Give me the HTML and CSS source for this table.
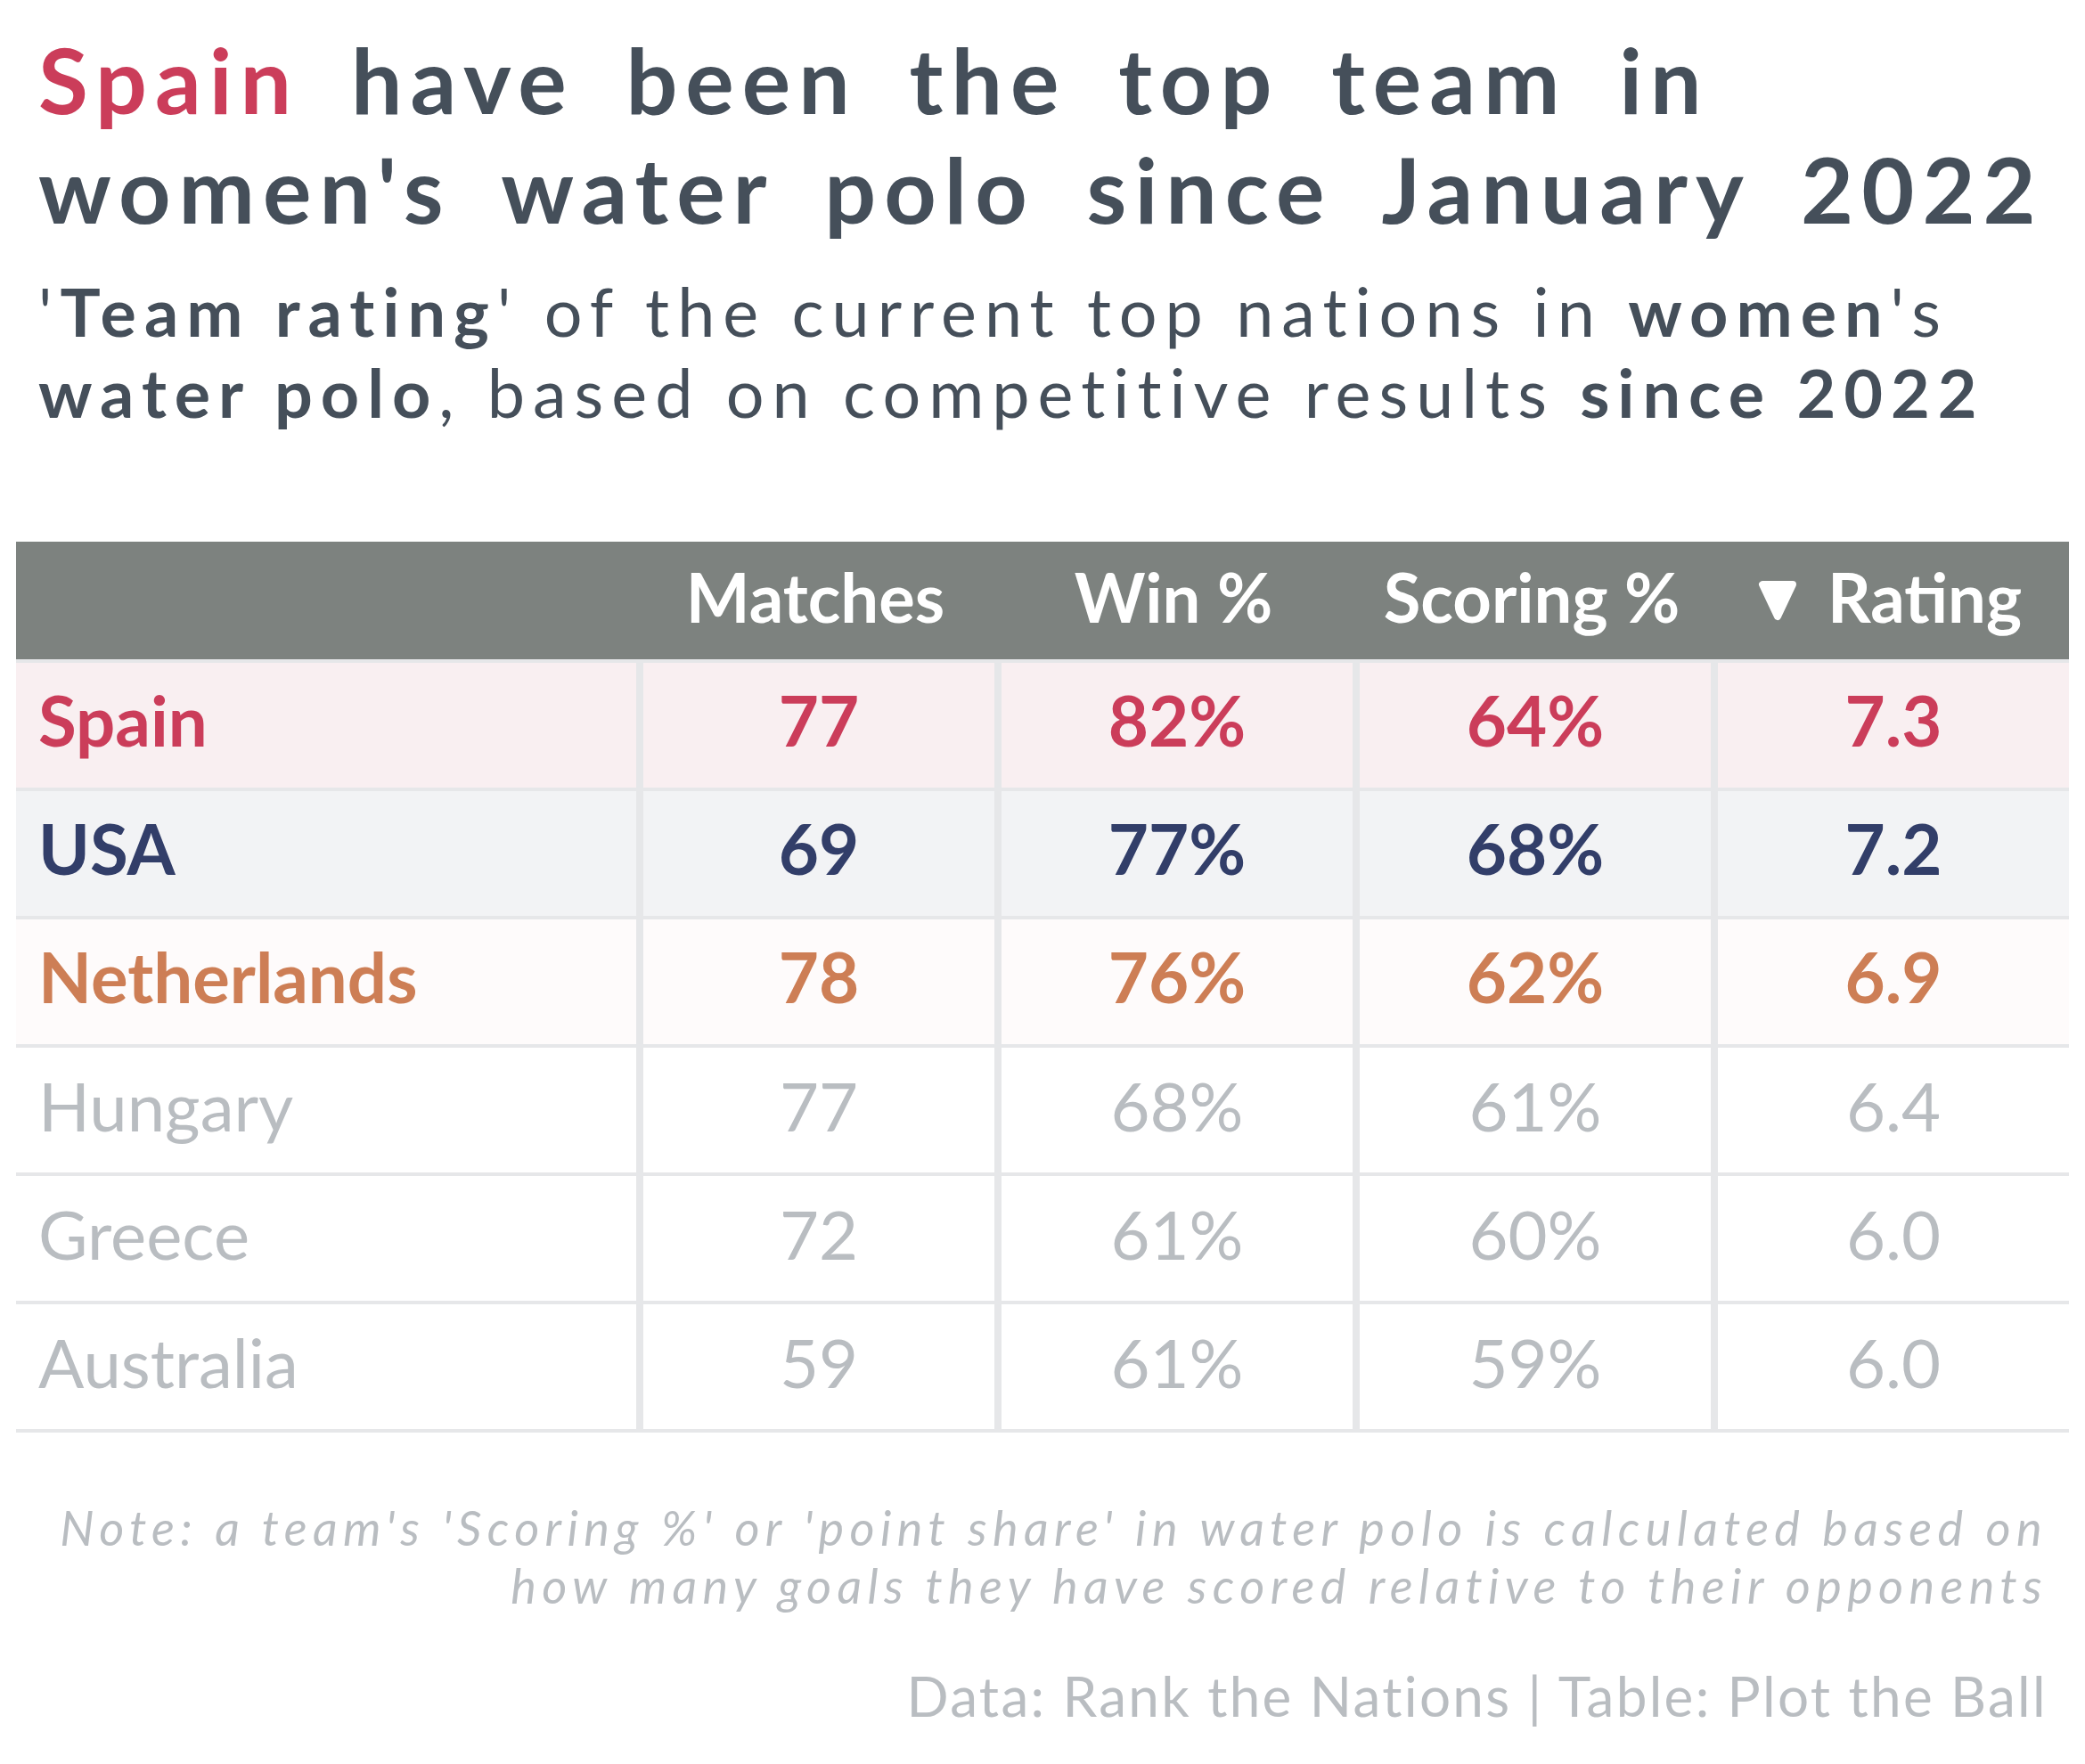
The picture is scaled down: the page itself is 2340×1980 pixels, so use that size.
FILE: index.html
```html
<!DOCTYPE html>
<html lang="en">
<head>
<meta charset="utf-8">
<title>Women's water polo team rating</title>
<link rel="stylesheet" href="styles.css">
</head>
<body>
<div class="page">
  <header class="heading">
    <h1 class="title"><span class="red">Spain</span> have been the top team in<br>women's water polo since January 2022</h1>
    <p class="subtitle">'<b>Team rating</b>' of the current top nations in <b>women</b>'s<br><b>water polo</b>, based on competitive results <b>since 2022</b></p>
  </header>

  <table class="ratings">
    <colgroup>
      <col class="c-name">
      <col class="c-num">
      <col class="c-num">
      <col class="c-num">
      <col class="c-num">
    </colgroup>
    <thead>
      <tr>
        <th class="name"></th>
        <th>Matches</th>
        <th>Win %</th>
        <th>Scoring %</th>
        <th><svg class="tri" width="44" height="46" viewBox="0 0 44 46" aria-hidden="true"><path d="M5 5 L39 5 L22 41 Z" fill="#ffffff" stroke="#ffffff" stroke-width="8" stroke-linejoin="round"/></svg>Rating</th>
      </tr>
    </thead>
    <tbody>
      <tr class="spain"><td class="name">Spain</td><td>77</td><td>82%</td><td>64%</td><td>7.3</td></tr>
      <tr class="usa"><td class="name">USA</td><td>69</td><td>77%</td><td>68%</td><td>7.2</td></tr>
      <tr class="ned"><td class="name">Netherlands</td><td>78</td><td>76%</td><td>62%</td><td>6.9</td></tr>
      <tr class="other"><td class="name">Hungary</td><td>77</td><td>68%</td><td>61%</td><td>6.4</td></tr>
      <tr class="other"><td class="name">Greece</td><td>72</td><td>61%</td><td>60%</td><td>6.0</td></tr>
      <tr class="other"><td class="name">Australia</td><td>59</td><td>61%</td><td>59%</td><td>6.0</td></tr>
    </tbody>
  </table>

  <footer class="foot">
    <p class="note">Note: a team's 'Scoring %' or 'point share' in water polo is calculated based on<br>how many goals they have scored relative to their opponents</p>
    <p class="source">Data: Rank the Nations | Table: Plot the Ball</p>
  </footer>
</div>
</body>
</html>
```

FILE: styles.css
```css
html, body {
  margin: 0;
  padding: 0;
  background: #ffffff;
}

body {
  font-family: "Lato", "Noto Sans", sans-serif;
  color: #454f5a;
}

.page {
  width: 2340px;
  height: 1980px;
  box-sizing: border-box;
  padding: 27px 18px 0 18px;
  display: flex;
  flex-direction: column;
}

.heading {
  padding-left: 25px;
}

.title {
  margin: 0;
  font-size: 102px;
  line-height: 123px;
  font-weight: 700;
  color: #454f5a;
  letter-spacing: 9px;
  word-spacing: 24px;
}

.red {
  color: #cb3d5a;
}

.subtitle {
  margin: 30px 0 0 0;
  font-size: 75.5px;
  line-height: 91px;
  font-weight: 400;
  color: #454f5a;
  letter-spacing: 9px;
}

.subtitle b {
  font-weight: 700;
}

.ratings {
  margin-top: 123px;
  width: 2304px;
  border-collapse: separate;
  border-spacing: 0;
  table-layout: fixed;
}

.c-name {
  width: 696px;
}

.c-num {
  width: 402px;
}

.ratings th {
  background: #7d827f;
  color: #ffffff;
  height: 136px;
  padding: 0 0 10px 0;
  box-sizing: border-box;
  font-size: 76px;
  font-weight: 700;
  text-align: center;
  vertical-align: middle;
  border-bottom: 4px solid #e6e7e9;
  white-space: nowrap;
}

.tri {
  display: inline-block;
  width: 44px;
  height: 46px;
  margin-right: 34px;
  vertical-align: 2px;
}

.ratings td {
  height: 144px;
  box-sizing: border-box;
  padding: 0 0 12px 0;
  font-size: 78px;
  text-align: center;
  vertical-align: middle;
  border-bottom: 4px solid #e6e7e9;
  border-left: 8px solid #e6e7e9;
  white-space: nowrap;
}

.ratings td.name {
  text-align: left;
  padding-left: 25px;
  border-left: none;
}

.spain td {
  background: #f9eff1;
  color: #cb3d5a;
  font-weight: 700;
}

.usa td {
  background: #f2f3f5;
  color: #323e69;
  font-weight: 700;
}

.ned td {
  background: #fefbfb;
  color: #cd7e55;
  font-weight: 700;
}

.other td {
  background: #ffffff;
  color: #b9bdc1;
  font-weight: 400;
  font-size: 76px;
}

.foot {
  padding-right: 24px;
  text-align: right;
  color: #b9bdc1;
}

.note {
  margin: 74px 0 0 0;
  font-size: 54px;
  line-height: 65px;
  font-style: italic;
  letter-spacing: 6.4px;
}

.source {
  margin: 54px 0 0 0;
  font-size: 62px;
  line-height: 75px;
  letter-spacing: 2.3px;
}
```
